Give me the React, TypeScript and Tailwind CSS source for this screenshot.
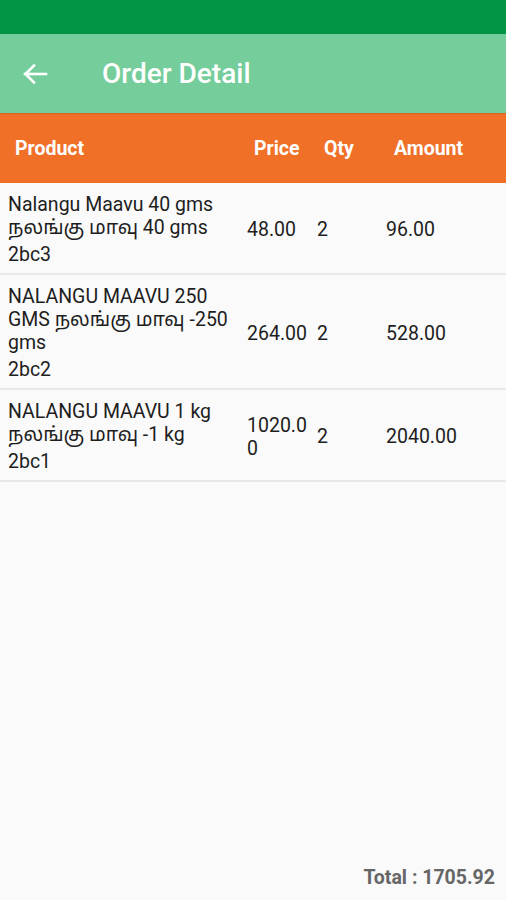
import React from "react";

const rows = [
  { name: "Nalangu Maavu 40 gms நலங்கு மாவு 40 gms", code: "2bc3", price: "48.00", qty: "2", amount: "96.00" },
  { name: "NALANGU MAAVU 250 GMS நலங்கு மாவு -250 gms", code: "2bc2", price: "264.00", qty: "2", amount: "528.00" },
  { name: "NALANGU MAAVU 1 kg நலங்கு மாவு -1 kg", code: "2bc1", price: "1020.00", qty: "2", amount: "2040.00" },
];

export default function App() {
  return (
    <div
      className="flex h-[900px] w-full flex-col bg-[#fafafa]"
      style={{ fontFamily: "Roboto, 'Noto Sans Tamil', 'Noto Sans', sans-serif" }}
    >
      <div className="h-[34px] bg-[#009444]" />
      <div className="flex h-[79px] items-center bg-[#74cd9a]">
        <div className="flex w-[102px] items-center pl-[22px]">
          <svg width="26" height="24" viewBox="0 0 26 24" fill="none" stroke="white" strokeWidth="2.6" strokeLinecap="square">
            <path d="M24 12H3" />
            <path d="M12 3.5L3.5 12L12 20.5" />
          </svg>
        </div>
        <div className="text-[28px] font-medium leading-none text-white">Order Detail</div>
      </div>
      <div className="grid h-[70px] grid-cols-[239px_70px_70px_1fr] items-center border-t border-[#d86220] bg-[#f07028] pl-[15px] text-[19.5px] font-bold text-white">
        <div>Product</div>
        <div>Price</div>
        <div>Qty</div>
        <div>Amount</div>
      </div>
      <div className="flex-1">
        {rows.map((r) => (
          <div
            key={r.code}
            className="grid grid-cols-[232px_63px_62px_1fr] items-center gap-x-[7px] border-b-2 border-[#e8e8e8] pb-[7px] pt-[10px] pl-[8px] text-[19.5px] text-[#1e1e1e]"
          >
            <div>
              <div className="leading-[23px]">{r.name}</div>
              <div className="mt-[4px] leading-[23px]">{r.code}</div>
            </div>
            <div className="break-all leading-[23px]">{r.price}</div>
            <div className="leading-[23px]">{r.qty}</div>
            <div className="leading-[23px]">{r.amount}</div>
          </div>
        ))}
      </div>
      <div className="flex justify-end pb-[11px] pr-[11px] text-[19.5px] font-bold leading-[23px] text-[#666666]">
        Total : 1705.92
      </div>
    </div>
  );
}
